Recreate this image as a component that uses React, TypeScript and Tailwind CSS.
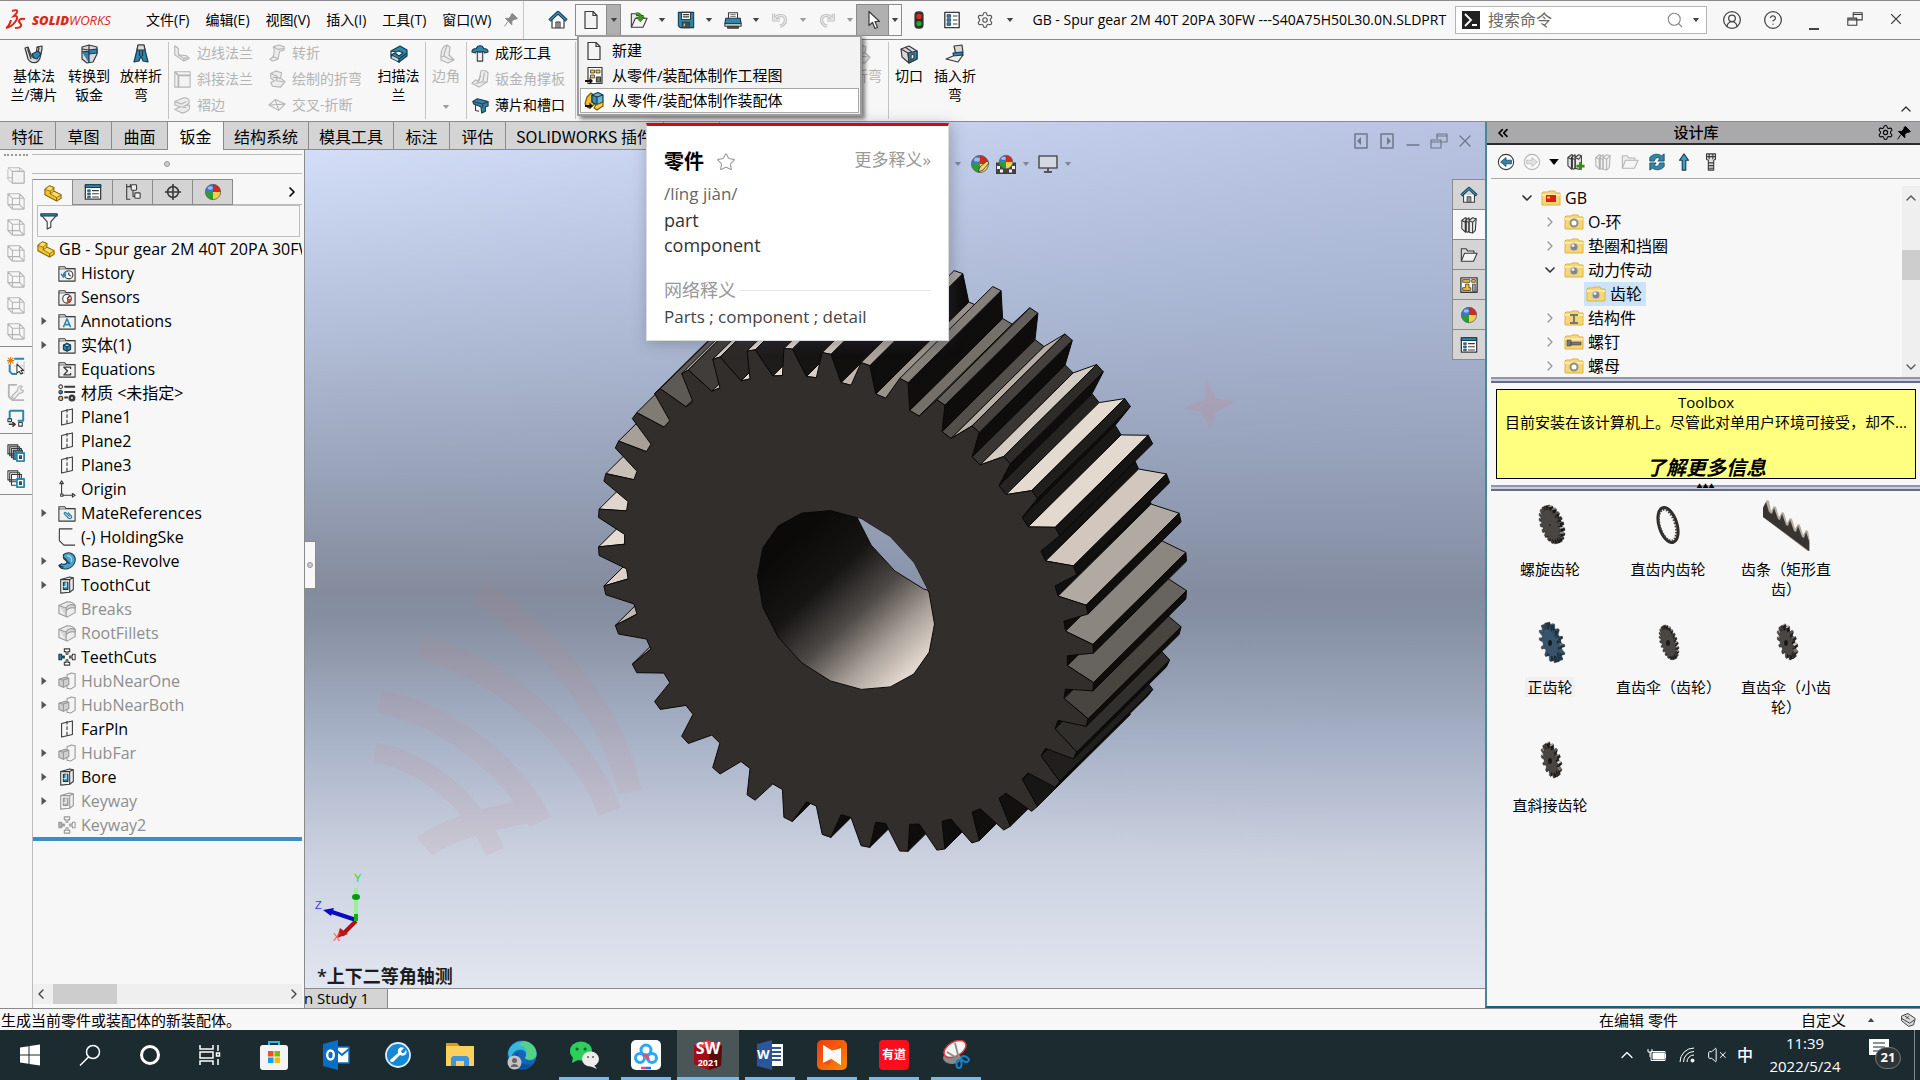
import React from 'react';
import {
  ChevronDown,
  ChevronLeft,
  ChevronRight,
  ChevronUp,
  ChevronsLeft,
  CircleHelp,
  CircleUserRound,
  Minus,
  Search,
  Settings,
  Star,
  VolumeX,
  X,
} from 'lucide-react';

type Point = [number, number];

interface IconProps {
  children: React.ReactNode;
  size?: string;
  muted?: boolean;
}

const Icon = ({ children, size = 'size-5', muted = false }: IconProps) => (
  <svg
    viewBox="0 0 20 20"
    className={`${size} shrink-0 ${muted ? 'opacity-35 grayscale' : ''}`}
    fill="none"
    stroke="#3a3a3a"
    strokeWidth="1.2"
    strokeLinejoin="round"
    aria-hidden="true"
  >
    {children}
  </svg>
);

const BLUE = '#2f86ab';
const STEEL = '#d9d9d9';

const glyphs: Record<string, React.ReactNode> = {
  home: (
    <>
      <path d="M4 10v8h12v-8" fill="#fff" />
      <path d="M8 18v-6h4v6M10 12v6" />
      <path d="M1.500 10.500 10 2.500l8.500 8" stroke="#123d54" strokeWidth="3.400" />
      <path d="M1.500 10.500 10 2.500l8.500 8" stroke="#3d93b8" strokeWidth="1.200" />
    </>
  ),
  page: (
    <>
      <path d="M4 1.500h8l4 4v13H4z" fill="#f3f3f3" />
      <path d="M12 1.500v4h4" />
    </>
  ),
  open: (
    <>
      <path d="M1.500 18V3h5l1 2h7v3" fill="#e8e8e8" />
      <path d="M1.500 18 6 8h13l-4.500 10z" fill="#f5f5f5" />
      <path d="M7 2c5 0 6 2 6 5h3l-4.500 5L7 7h3c0-2-1-3-3-5z" fill="#3f9a14" stroke="#23650a" strokeWidth=".8" />
    </>
  ),
  save: (
    <>
      <path d="M1.500 1.500h17v17h-15l-2-2z" fill={BLUE} stroke="#173b4d" />
      <path d="M5 1.500h10v8H5z" fill="#fff" />
      <path d="M6.500 4h7M6.500 6.500h7" />
      <path d="M6 12.500h8v6H6z" fill="#4c4c4c" />
      <path d="M8 14v3" stroke="#ddd" />
    </>
  ),
  print: (
    <>
      <path d="M5 8V2h10v6" fill="#fff" />
      <path d="M7 4h6M7 6h6" strokeWidth=".8" />
      <path d="M2 8h16l1 6H1z" fill={BLUE} stroke="#173b4d" />
      <path d="M1 14h18v3H1z" fill="#eee" />
      <path d="M4 17h12v2H4z" fill="#555" />
    </>
  ),
  undo: (
    <>
      <path d="M3 3v7h7M4 9c3-5 12-6 12 1 0 4-3 6-6 7" stroke="#b8b8b8" strokeWidth="3.400" />
      <path d="M3 3v7h7M4 9c3-5 12-6 12 1 0 4-3 6-6 7" stroke="#e6e6e6" strokeWidth="1.600" />
    </>
  ),
  redo: (
    <>
      <path d="M17 3v7h-7M16 9C13 4 4 3 4 10c0 4 3 6 6 7" stroke="#b8b8b8" strokeWidth="3.400" />
      <path d="M17 3v7h-7M16 9C13 4 4 3 4 10c0 4 3 6 6 7" stroke="#e6e6e6" strokeWidth="1.600" />
    </>
  ),
  cursor: <path d="M6 1.500v14l3.500-3 2.500 6 2.500-1-2.500-6h4.500z" fill="#fff" />,
  light: (
    <>
      <rect x="5.500" y="1" width="9" height="18" rx="3.500" fill="#2c2c2c" />
      <circle cx="10" cy="6" r="3" fill="#e02c14" stroke="none" />
      <circle cx="10" cy="14" r="3" fill="#25a82a" stroke="none" />
    </>
  ),
  props: (
    <>
      <path d="M2 1.500h16v17H2z" fill="#fff" strokeWidth="1.500" />
      <path d="M4.500 4h4v3h-4zM4.500 8.500h4v3h-4zM4.500 13h4v3h-4z" fill={BLUE} stroke="#173b4d" strokeWidth=".8" />
      <path d="M11 5.500h5M11 10h5M11 14.500h5" />
    </>
  ),
  list: (
    <>
      <path d="M1.500 2h17v16h-17z" fill="#fff" strokeWidth="1.400" />
      <path d="M1.500 2h17v3h-17z" fill={BLUE} stroke="#173b4d" />
      <path d="M4 7.500h3v2H4zM4 11h3v2H4zM4 14.500h3v2H4z" fill={BLUE} stroke="#173b4d" strokeWidth=".7" />
      <path d="M9 8.500h7.500M9 12h7.500M9 15.500h7.500" />
    </>
  ),
  drawing: (
    <>
      <path d="M4 1.500h14v16H4z" fill="#fff" />
      <path d="M6.500 4h4v3h-4zM12 4h4v3h-4zM6.500 9h4v3h-4z" fill="#f4c430" strokeWidth=".8" />
      <path d="M12.500 11h4v5h-4z" fill="#777" />
      <path d="M1 15h5" stroke="#111" strokeWidth="2" />
      <path d="M5.500 11.500 9 15l-3.500 3.500z" fill="#111" stroke="none" />
    </>
  ),
  assembly: (
    <>
      <path d="M3 6 7 2l4 3-1 9-6 3-3-4z" fill="#f0c02e" stroke="#7a5a08" />
      <path d="M8 4l6-2.500L19 4v7l-6 3-5-3z" fill="#6fb4d4" stroke="#173b4d" />
      <path d="M8 4l5 2v8l-5-3z" fill="#3c8fb5" stroke="#173b4d" />
      <path d="M13 6l6-2" stroke="#173b4d" />
      <path d="M12 14l7-3v4l-6 4-3-2z" fill="#f6cf4a" stroke="#7a5a08" />
      <path d="M1 15h5" stroke="#111" strokeWidth="2" />
      <path d="M5.500 11.500 9 15l-3.500 3.500z" fill="#111" stroke="none" />
    </>
  ),
  baseFlange: (
    <>
      <path d="M1 4l3-1 3 8c1 3 4 4 5 1l1-9 5-1v3l-2 9c-2 6-9 6-12 1z" fill={STEEL} />
      <path d="M8 10l6-3 3 3-4 5-3-1z" fill={BLUE} stroke="#173b4d" />
      <path d="M4 3v3l3 9M13 3l2 1-1 4" />
    </>
  ),
  convert: (
    <>
      <path d="M3 3l7-2 8 2v7l-4 8-6 1-5-4z" fill={STEEL} />
      <path d="M3 8c5-1 7-1 7 2v9M10 10l8-1v-4l-8 1z" fill={BLUE} stroke="#173b4d" />
      <path d="M3 5l7 1V1" />
    </>
  ),
  loft: (
    <>
      <path d="M7 1h6l1 5 3 12-5-1-2-5-2 5-5 1L6 6z" fill={BLUE} stroke="#173b4d" />
      <path d="M7 1h6l1 5H6z" fill={STEEL} />
      <path d="M8.500 6v6M11.500 6v6" stroke="#173b4d" />
    </>
  ),
  sweep: (
    <>
      <path d="M2 7 11 2l7 4v6l-8 6-8-4v-3l4-2 4 3 4-3-4-2-3 1z" fill={BLUE} stroke="#173b4d" />
      <path d="M2 7v4l8 4v4M10 15l8-6" stroke="#173b4d" />
      <path d="M3 13l6 3" stroke="#d7d7d7" strokeWidth="2" />
    </>
  ),
  flange: (
    <>
      <path d="M2 2l4 3v7l9 1 3 3-6 3-10-7z" fill={STEEL} />
      <path d="M6 12l6 4 6-1M12 16v3" />
    </>
  ),
  miter: (
    <>
      <path d="M2 2h17v17H2z" fill="#eee" />
      <path d="M2 2l4 4h13M6 6v13" strokeWidth="2" />
    </>
  ),
  hem: (
    <>
      <path d="M2 6 12 2c8 0 8 7 0 9l6-1c2 5-2 8-8 9L2 15l6-3-6-2z" fill={STEEL} />
      <path d="M2 6l7 3 6-3M8 12l7 1" />
    </>
  ),
  jog: (
    <>
      <path d="M6 3l6-2 6 2v4l-5 1-2 9-6 2-3-2 4-3 1-7z" fill={STEEL} />
      <path d="M6 3l5 3 7-1M5 14l6 2" />
    </>
  ),
  bend: (
    <>
      <path d="M3 4l6-3 6 2-1 6 5 4-5 6-9-1-2-4 4-2-4-3z" fill={STEEL} />
      <path d="M3 4l7 3-1 5 9 1M5 8l9 1" />
    </>
  ),
  cross: (
    <>
      <path d="M1 10l7-6 11 5-7 7z" fill="#eee" />
      <path d="M1 10l18-1M8 4l4 12" />
    </>
  ),
  corner: (
    <>
      <path d="M5 12c0-7 2-10 6-11l3 2-1 8 5 5-6 3-7-3z" fill={STEEL} />
      <path d="M11 1c0 3-3 6-3 11l5 3 5 1M8 12l-3 1" />
    </>
  ),
  gusset: (
    <>
      <path d="M11 1l4-1 4 3-1 10-9 6-8-4 4-4 4 1z" fill={STEEL} />
      <path d="M15 3l-2 10-8 2M13 13l5 1M11 6l-4 8" />
    </>
  ),
  forming: (
    <>
      <path d="M7 8h6v11H7z" fill="#eee" />
      <path d="M1 9c0-3 3-4 5-4 1-4 7-4 8 0 2 0 5 1 5 4l-4 1c0-2-2-2-3-1H8c-1-1-3-1-3 1z" fill={BLUE} stroke="#173b4d" />
    </>
  ),
  tabSlot: (
    <>
      <path d="M2 6l5-3 12 3v5l-3 1v5l-4 2-1-7-8-3z" fill={BLUE} stroke="#173b4d" />
      <path d="M2 6l11 3 6-3M13 9v4M5 10v6l4 1" />
    </>
  ),
  rip: (
    <>
      <path d="M2 5l8-3 8 5v8l-8 4-7-6z" fill={STEEL} />
      <path d="M9 9l9-2v8l-8 4z" fill={BLUE} stroke="#173b4d" />
      <path d="M2 5l7 4 1 10M6 3l7 5" />
      <path d="M12 11l3-1v4l-3 2z" fill="#eee" />
    </>
  ),
  insertBend: (
    <>
      <path d="M9 2l8-1 1 8-7 2z" fill={STEEL} />
      <path d="M8 9l9-1 1 3-9 2z" fill={BLUE} stroke="#173b4d" />
      <path d="M8 12l10-1-5 7-12-3z" fill="#eee" />
    </>
  ),
  part: (
    <>
      <path d="M1 6l5-4 5 2v4l8 4v4l-5 3L1 12z" fill="#f3c332" stroke="#8a6508" />
      <path d="M6 2l5 2-4 4-6-2zM11 8l8 4-5 3-7-4z" fill="#fbdc66" stroke="#8a6508" strokeWidth=".9" />
      <path d="M7 8v3M14 15v4" stroke="#8a6508" />
    </>
  ),
  config: (
    <>
      <path d="M3 1v17h4M3 4h5M7 1v3" />
      <rect x="8" y="2" width="6" height="6" rx="1" fill="#eee" />
      <rect x="12" y="11" width="6" height="6" rx="1" fill="#eee" />
      <path d="M10 8v7h2" />
    </>
  ),
  target: (
    <>
      <circle cx="10" cy="10" r="6" strokeWidth="1.800" />
      <path d="M10 1v18M1 10h18" strokeWidth="1.800" />
    </>
  ),
  ball: (
    <>
      <path d="M10 10V1.500A8.500 8.500 0 0 0 1.500 10z" fill="#3a78d8" stroke="none" />
      <path d="M10 10V1.500A8.500 8.500 0 0 1 18.500 10z" fill="#d02a20" stroke="none" />
      <path d="M10 10H1.500A8.500 8.500 0 0 0 10 18.500z" fill="#2f9c33" stroke="none" />
      <path d="M10 10v8.500A8.500 8.500 0 0 0 18.500 10z" fill="#f2cf4c" stroke="none" />
      <circle cx="10" cy="10" r="8.500" stroke="#555" strokeWidth=".8" />
      <ellipse cx="7" cy="5.500" rx="3" ry="2" fill="#fff" stroke="none" opacity=".5" />
    </>
  ),
  filter: (
    <>
      <path d="M1 3h18l-7 8v6l-4 2v-8z" fill="#f4f4f4" />
      <path d="M1 2h18v2.500H1z" fill={BLUE} stroke="#173b4d" />
    </>
  ),
  plane: (
    <>
      <path d="M4 4l12-3v15L4 19z" />
      <path d="M10 1v18" strokeDasharray="4 2" />
    </>
  ),
  origin: (
    <>
      <path d="M4 4v13h12" />
      <path d="M4 1l2 3H2zM19 17l-3-2v4z" fill="#fff" />
      <path d="M3 15.500h2.500V18H3z" fill="#fff" />
    </>
  ),
  sketch: <path d="M16 1H1.500v13l5 5H19" />,
  revolve: (
    <>
      <path d="M6 3c7-5 14 0 13 7-2 9-14 12-18 5l3-2c4 2 8-1 5-5l-3-2z" fill="#4ea3cb" stroke="#173b4d" />
      <path d="M6 7l7 6M1 15l5 2" stroke="#173b4d" strokeWidth="1.600" />
      <path d="M10 4c4 0 6 3 5 7" stroke="#a9d9ee" />
    </>
  ),
  cut: (
    <>
      <path d="M3 4l10-3 4 1v13l-4 3-10 1z" fill="#eee" />
      <path d="M3 4h10l4-2M13 4v14" />
      <path d="M6 7h5v8H6z" fill={BLUE} stroke="#173b4d" />
      <path d="M9 7v5H6" stroke="#fff" />
    </>
  ),
  fillet: (
    <>
      <path d="M1 6l9-4c5 0 8 2 9 4v8l-9 5-9-4z" fill="#e5e5e5" />
      <path d="M1 6l8 3v10M9 9c1-3 5-5 10-3v3c-4-1-8 0-10 3z" fill="#bbb" />
    </>
  ),
  pattern: (
    <>
      <path d="M7 1h6v3h-2v3H9V4H7zM7 19h6v-3h-2v-3H9v3H7zM19 7v6h-3v-2h-3V9h3V7z" fill="#fff" />
      <path d="M1 7v6h3v-2h3V9H4V7z" fill={BLUE} stroke="#173b4d" />
    </>
  ),
  extrude: (
    <>
      <path d="M10 3l5-2 4 1v14l-5 3-4-1z" fill="#f2f2f2" />
      <path d="M1 8l6-2 5 1v7l-6 3-5-2z" fill="#aaa" />
      <path d="M1 8l5 1 6-2M6 9v8" />
    </>
  ),
  material: (
    <>
      <circle cx="3" cy="3" r="2" fill="#fff" />
      <circle cx="3" cy="9" r="2" fill={BLUE} />
      <circle cx="3" cy="16" r="2.300" fill="#f2c12e" />
      <path d="M7 3h12M7 9h12M7 15h4" strokeWidth="2.200" />
      <circle cx="15.500" cy="15.500" r="2.500" strokeWidth="2.800" />
    </>
  ),
  cube: (
    <>
      <path d="M1 4V15l5 4h13V6l-5-4H1l5 4h13M6 6v13M14 2v11H1M14 13l5 6" strokeWidth="1" />
      <path d="M6 6h13v13H6z" fill="#eee" />
    </>
  ),
  wireCube: <path d="M1 2V14l5 5h13V7l-5-5H1l5 5h13M6 7v12M14 2v12H1M14 14l5 5" strokeWidth="1.200" />,
  select: (
    <>
      <path d="M8 2h11M3 8v8l3 3h5" stroke={BLUE} strokeWidth="2.200" />
      <path d="M12 5v14M19 5v14M7 10h12" stroke="#ccc" />
      <path d="M4 0v8M0 4h8M1 1l6 6M7 1 1 7" stroke="#d97b12" />
      <path d="M11 8v10l2.500-2 2 3 2-1-2-3h3z" fill="#fff" />
    </>
  ),
  wrench: (
    <>
      <path d="M11 2H2v13l4 4h13" strokeWidth="2" />
      <path d="M5 15l7-7c-1-4 3-6 5-4l-2 2 1 2h2c1 2-2 4-4 3l-6 7z" fill="#ddd" />
    </>
  ),
  screenIcon: (
    <>
      <path d="M3 2h15v11h-6M3 2v9" stroke={BLUE} strokeWidth="2.200" />
      <path d="M1 11h4v3H1zM13 15h4v4h-4z" fill="#fff" />
      <path d="M2 17h6M6 14.500 9 17l-3 2.500" strokeWidth="1.800" />
    </>
  ),
  stack: (
    <>
      <path d="M1 1h11v10H1zM3 3h11v10H3zM5 5h11v10H5z" fill="#ddd" />
      <path d="M7 7h10v10H7z" fill={BLUE} />
      <path d="M11 10h8v9h-8z" fill="#fff" stroke={BLUE} strokeWidth="2" />
      <path d="M14 13h2v3h-2z" fill={BLUE} />
    </>
  ),
  stackOutline: (
    <>
      <path d="M1 1h11v10H1zM3 3h11v10H3zM5 5h11v12H5z" fill="#fff" />
      <path d="M11 10h8v9h-8z" fill="#fff" stroke={BLUE} strokeWidth="2" />
      <path d="M14 13h2v3h-2z" fill={BLUE} />
    </>
  ),
  books: (
    <>
      <path d="M2 5l4-3 1 0v14l-1 2-4-4zM6 5l4-3v15l-2 1-2-1zM10 5l4-3 4 1-1 13-3 3-4-1z" fill="#e8e8e8" />
      <path d="M2 5l4 2v11M6 6l4 1v11M10 5l4 2 4-4M14 7v12" />
    </>
  ),
  addBooks: (
    <>
      <path d="M1 5l4-3 1 0v14l-1 2-4-4zM5 5l4-3v15l-2 1-2-1zM9 5l4-3 3 1v13l-3 2-4-1z" fill="#e8e8e8" />
      <path d="M1 5l4 2v11M5 6l4 1v11M9 5l4 2 3-4" />
      <path d="M15 10v9M10.500 14.500h9" stroke="#2f8f10" strokeWidth="3" />
    </>
  ),
  folder: (
    <>
      <path d="M1.500 17V3h5l2 2.500h7V8" fill="#ddd" />
      <path d="M1.500 17 5 8h14l-4 9z" fill="#f4f4f4" />
    </>
  ),
  palette: (
    <>
      <path d="M1 2h18v16H1z" fill="#fff" strokeWidth="1.500" />
      <path d="M3 4h8v3H3zM13 4h4v3h-4zM6 9h4v4h2v3H3v-3h3z" fill="#f2c12e" strokeWidth=".9" />
      <path d="M14 9h3v8h-3z" fill="#aaa" strokeWidth=".9" />
    </>
  ),
  back: (
    <>
      <circle cx="10" cy="10" r="8.500" fill="#fff" />
      <path d="M4 10l6-5v3h6v4h-6v3z" fill={BLUE} stroke="#173b4d" strokeWidth=".8" />
    </>
  ),
  forward: (
    <>
      <circle cx="10" cy="10" r="8.500" fill="#fff" />
      <path d="M16 10l-6-5v3H4v4h6v3z" fill="#bbb" strokeWidth=".8" />
    </>
  ),
  sync: (
    <>
      <path d="M2 9V5c4-5 10-4 13-2l3-2v8h-7l2-3c-3-2-5 0-6 3z" fill={BLUE} stroke="#173b4d" strokeWidth=".8" />
      <path d="M18 11v4c-4 5-10 4-13 2l-3 2v-8h7l-2 3c3 2 5 0 6-3z" fill={BLUE} stroke="#173b4d" strokeWidth=".8" />
    </>
  ),
  up: <path d="M10 1l5 7h-3v11H8V8H5z" fill="#3d9cc8" stroke="#173b4d" />,
  bolt: (
    <>
      <path d="M5 1h10v6l-2 1v11H7V8L5 7z" fill="#ddd" />
      <path d="M5 4h10M8 1v6M12 1v6M7 11h6M7 14h6M7 17h6" />
    </>
  ),
  monitor: (
    <>
      <path d="M1 2h18v12H1z" fill="#d4d8e4" stroke="#555" strokeWidth="1.600" />
      <path d="M10 14v4M6 18h8" stroke="#555" strokeWidth="2" />
    </>
  ),
  docLeft: (
    <>
      <path d="M4 3h12v14H4z" stroke="#6f7788" strokeWidth="1.500" />
      <path d="M10 6v8l-4-4z" fill="#6f7788" stroke="none" />
    </>
  ),
  docRight: (
    <>
      <path d="M4 3h12v14H4z" stroke="#6f7788" strokeWidth="1.500" />
      <path d="M10 6v8l4-4z" fill="#6f7788" stroke="none" />
    </>
  ),
  restore: <path d="M2 9h10v8H2zM8 8V3h10v8h-6M8 5h10M2 11h10" />,
  pin: <path d="M12 2l6 6-2 1-2 0-3 3 0 4-8-8 4 0 3-3 0-2zM6 12l-4 6" fill="currentColor" stroke="currentColor" />,
  tag: (
    <>
      <path d="M2 5l8-3 9 6-2 8-6 2-9-7z" fill="#ddd" />
      <path d="M2 8l10 6 6-4M6 5l6 4M8 8l3-3" />
    </>
  ),
};

const Glyph = ({ name, size, muted }: { name: string; size?: string; muted?: boolean }) => (
  <Icon size={size} muted={muted}>
    {glyphs[name]}
  </Icon>
);

// grey feature folder with a small badge in it
const FeatureFolder = ({ kind }: { kind: string }) => (
  <Icon size="size-[18px]">
    <path d="M1 19V3h6.500L9 5h10v14z" fill="#f0f0f0" />
    <path d="M1 5.500h18" strokeWidth=".8" />
    {kind === 'history' && (
      <>
        <circle cx="12" cy="12" r="4.500" fill="#fff" />
        <path d="M12 9.500V12l2.500 1.500" />
        <path d="M3.500 11l2.500 3.500 3-3M6 14c0-4 2-6 5-6" stroke={BLUE} strokeWidth="1.800" />
      </>
    )}
    {kind === 'sensor' && (
      <>
        <circle cx="10" cy="12" r="4.800" fill="#fff" />
        <path d="M10 12l3-3" strokeWidth="1.500" />
        <path d="M10 12h4.500a4.500 4.500 0 0 1-4.500 4.500z" fill="#e04020" stroke="none" />
      </>
    )}
    {kind === 'note' && <path d="M6 17 10 7.500l4 9.500M7.500 14h5" stroke={BLUE} strokeWidth="1.800" />}
    {kind === 'solid' && <path d="M6 10l4-2 4 2v5l-4 2-4-2zM6 10l4 2 4-2M10 12v5" fill={BLUE} stroke="#173b4d" />}
    {kind === 'sigma' && <path d="M14 10V8H6.500l4 4.200-4 4.300H14v-2" strokeWidth="1.400" />}
    {kind === 'mate' && (
      <path d="M13 14l-4-4c-1.500-1.500-3 0-1.500 1.500l4 4c2.500 2 5-.5 2.500-3l-3-3" stroke={BLUE} strokeWidth="1.400" />
    )}
  </Icon>
);

const Arrow = ({ muted = false }: { muted?: boolean }) => (
  <svg viewBox="0 0 8 5" className={`h-1 w-2 shrink-0 ${muted ? 'opacity-50' : ''}`} aria-hidden="true">
    <path d="M0 0h8L4 5z" fill="#444" />
  </svg>
);

interface GearProps {
  cx: number;
  cy: number;
  ux: number;
  uy: number;
  vy: number;
  dx: number;
  dy: number;
  teeth: number;
  root: number;
  tip: number;
  gap: number;
  face: string;
  light: number[];
  dark: number[];
  stroke?: number;
}

const DEG = Math.PI / 180;
const toPoints = (pts: Point[]) => pts.map((p) => p.map((n) => n.toFixed(1)).join(',')).join(' ');

// Extruded gear in oblique view, side faces painted back to front
const GearBody = (g: GearProps) => {
  const project = (r: number, deg: number): Point => {
    const c = Math.cos(deg * DEG) * r;
    const s = Math.sin(deg * DEG) * r;
    return [g.cx + g.ux * c, g.cy + g.uy * c - g.vy * s];
  };
  const step = 360 / g.teeth;
  const profile: { p: Point; a: number; r: number }[] = [];
  for (let i = 0; i < g.teeth; i += 1) {
    const mid = (i + 0.5) * step;
    [
      [g.root, -step / 2 + g.gap],
      [1, -g.tip],
      [1, g.tip],
      [g.root, step / 2 - g.gap],
    ].forEach(([r, off]) => profile.push({ p: project(r, mid + off), a: mid + off, r }));
  }
  const sides = profile
    .map((from, i) => {
      const to = profile[(i + 1) % profile.length];
      const ex = to.p[0] - from.p[0];
      const ey = to.p[1] - from.p[1];
      const fx = to.r * Math.cos(to.a * DEG) - from.r * Math.cos(from.a * DEG);
      const fy = to.r * Math.sin(to.a * DEG) - from.r * Math.sin(from.a * DEG);
      const normal = Math.atan2(-fx, fy) / DEG;
      const delta = Math.abs(((normal - 110 + 540) % 360) - 180);
      const k = Math.exp(-(delta * delta) / (2 * 31 * 31));
      const rgb = g.dark.map((c, n) => Math.round(c + (g.light[n] - c) * k));
      return {
        visible: -ey * g.dx + ex * g.dy > 0,
        depth: (from.p[0] + to.p[0]) * g.dx + (from.p[1] + to.p[1]) * g.dy,
        fill: `rgb(${rgb.join(',')})`,
        points: toPoints([
          from.p,
          to.p,
          [to.p[0] + g.dx, to.p[1] + g.dy],
          [from.p[0] + g.dx, from.p[1] + g.dy],
        ]),
      };
    })
    .filter((s) => s.visible)
    .sort((a, b) => a.depth - b.depth);

  return (
    <g stroke="#0a0908" strokeWidth={g.stroke ?? 1} strokeLinejoin="round">
      {sides.map((s) => (
        <polygon key={s.points} points={s.points} fill={s.fill} />
      ))}
      <polygon points={toPoints(profile.map((v) => v.p))} fill={g.face} />
    </g>
  );
};

const STONE = [230, 220, 210];
const COAL = [14, 13, 12];

const boreRing = (dx: number, dy: number): Point[] =>
  Array.from({ length: 18 }, (_, i) => {
    const c = Math.cos(i * 20 * DEG);
    const s = Math.sin(i * 20 * DEG);
    return [846 + dx + 88.5 * c, 478 + dy + 24 * c - 86.5 * s];
  });

const Scene = () => (
  <svg className="pointer-events-none absolute inset-0 size-full" aria-label="Spur gear" role="img">
    <defs>
      <linearGradient id="bore" gradientUnits="userSpaceOnUse" x1="780" y1="430" x2="900" y2="560">
        <stop offset="0" stopColor="#0b0a09" />
        <stop offset=".3" stopColor="#161514" />
        <stop offset=".55" stopColor="#4d4946" />
        <stop offset=".8" stopColor="#aaa19a" />
        <stop offset="1" stopColor="#e2d8cf" />
      </linearGradient>
      <linearGradient id="through" x1="0" y1="0" x2="0" y2="1">
        <stop offset="0" stopColor="#a7b2ca" />
        <stop offset="1" stopColor="#8690a6" />
      </linearGradient>
      <clipPath id="bore-clip">
        <polygon points={toPoints(boreRing(0, 0))} />
      </clipPath>
    </defs>
    <g fill="none" stroke="#d87878" strokeWidth="24" opacity=".09">
      <path d="M380 580c60 10 130 60 160 120" />
      <path d="M375 630c50 10 100 50 120 100" strokeWidth="20" />
      <path d="M420 525c80 20 160 90 190 165" />
      <path d="M480 470c60 40 130 110 150 200" />
      <path d="M425 725c20-18 70-30 100-35" />
    </g>
    <path d="M1184 286l20-8 2-22 10 20 20 4-20 10-6 16-10-16z" fill="#d87878" opacity=".18" />
    <GearBody
      cx={846}
      cy={478}
      ux={248}
      uy={68}
      vy={242}
      dx={93}
      dy={-92}
      teeth={40}
      root={0.893}
      tip={1}
      gap={1.3}
      face="#322e2b"
      light={STONE}
      dark={COAL}
    />
    <polygon points={toPoints(boreRing(0, 0))} fill="url(#bore)" stroke="#0a0908" />
    <g clipPath="url(#bore-clip)">
      <polygon points={toPoints(boreRing(93, -92))} fill="url(#through)" stroke="#0a0908" />
    </g>
    <g strokeWidth="4" fill="none">
      <path d="M356 798l-24-8" stroke="#0a0ac0" />
      <path d="M323 788l11-2-3 8z" fill="#0a0ac0" stroke="none" />
      <path d="M356 799l-14 14" stroke="#b01010" />
      <path d="M337 816l3-10 8 6z" fill="#c01818" stroke="none" />
      <path d="M356 798v-32" stroke="#96f296" />
      <path d="M356 799v-7" stroke="#12b012" />
      <ellipse cx="356" cy="775" rx="4" ry="3" fill="#08980a" stroke="none" />
    </g>
    <g className="font-['Liberation_Sans',sans-serif] text-[11px]">
      <text x="354" y="760" fill="#22e022">Y</text>
      <text x="315" y="787" fill="#3434ff">Z</text>
      <text x="333" y="819" fill="#ff5050">X</text>
    </g>
  </svg>
);

const Logo = () => (
  <div className="flex w-[138px] shrink-0 items-center gap-1 pl-1 text-[#da291c]">
    <svg viewBox="0 0 24 24" className="size-6" fill="none" stroke="currentColor" strokeWidth="2" aria-hidden="true">
      <path d="M8 3c6-2 7 0 2 5 4-1 4 3 1 6-2 3-5 5-9 6 3-1 4-5 5-8" />
      <path d="M21 11c-6-1-7 2-5 4s2 5-5 5" />
    </svg>
    <span className="font-['Open_Sans',sans-serif] text-[13px] italic leading-none">
      <b className="font-extrabold">SOLID</b>WORKS
    </span>
  </div>
);

const menus = ['文件(F)', '编辑(E)', '视图(V)', '插入(I)', '工具(T)', '窗口(W)'];

const quickTools = [
  { icon: 'open', label: '打开', muted: false },
  { icon: 'save', label: '保存', muted: false },
  { icon: 'print', label: '打印', muted: false },
  { icon: 'undo', label: '撤销', muted: true },
  { icon: 'redo', label: '重做', muted: true },
];

const TitleBar = () => (
  <header className="flex h-10 items-center border-y border-[#8b8b8b] bg-[#f7f7f7] text-sm">
    <Logo />
    <nav className="flex shrink-0">
      {menus.map((m) => (
        <button key={m} type="button" className="px-2 leading-5">
          {m}
        </button>
      ))}
    </nav>
    <span className="flex w-6 shrink-0 justify-center text-[#8a8a8a]">
      <Glyph name="pin" size="size-4" />
    </span>
    <button type="button" aria-label="主页" className="flex h-full w-13 shrink-0 items-center justify-center border-l border-[#c8c8c8] pl-4">
      <Glyph name="home" />
    </button>
    <div className="flex h-8 shrink-0 border border-[#8b8b8b]">
      <button type="button" aria-label="新建" className="flex w-[30px] items-center justify-center">
        <Glyph name="page" />
      </button>
      <button type="button" aria-label="新建选项" className="flex w-[14px] items-center justify-center border-l border-[#8b8b8b] bg-[#b0b0b0]">
        <Arrow />
      </button>
    </div>
    {quickTools.map((t) => (
      <div key={t.icon} className="flex shrink-0">
        <button type="button" aria-label={t.label} className="flex w-[35px] items-center justify-center">
          <Glyph name={t.icon} size="size-[18px]" />
        </button>
        <button type="button" aria-label={`${t.label}选项`} className="flex w-3 items-center justify-center">
          <Arrow muted={t.muted} />
        </button>
      </div>
    ))}
    <div className="flex h-8 shrink-0 border border-[#8b8b8b]">
      <button type="button" aria-label="选择" className="flex w-8 items-center justify-center border-r border-[#8b8b8b] bg-[#b0b0b0]">
        <Glyph name="cursor" />
      </button>
      <button type="button" aria-label="选择选项" className="flex w-3 items-center justify-center">
        <Arrow />
      </button>
    </div>
    {['light', 'props'].map((t) => (
      <button key={t} type="button" aria-label={t} className="flex w-[33px] shrink-0 items-center justify-center">
        <Glyph name={t} size="size-[18px]" />
      </button>
    ))}
    <button type="button" aria-label="选项" className="flex w-[46px] shrink-0 items-center gap-3 pl-2">
      <Settings className="size-[18px] text-[#555]" strokeWidth={1.5} />
      <Arrow />
    </button>
    <h1 className="ml-[18px] min-w-0 flex-1 truncate text-[14px]">GB - Spur gear 2M 40T 20PA 30FW ---S40A75H50L30.0N.SLDPRT</h1>
    <div className="flex h-7 w-[252px] shrink-0 items-center border border-[#b5b5b5] bg-white px-1.5">
      <svg viewBox="0 0 18 18" className="mr-2 size-[18px]" aria-hidden="true">
        <path d="M0 0h18v18H0z" fill="#222" />
        <path d="M3 3l6 6-6 6M10 14h5" stroke="#fff" strokeWidth="1.8" fill="none" />
      </svg>
      <input type="text" aria-label="搜索命令" placeholder="搜索命令" className="min-w-0 flex-1 text-base outline-none placeholder:text-[#6a6a6a]" />
      <Search className="mr-2 size-[18px] text-[#8a8a8a]" strokeWidth={1.5} />
      <Arrow />
    </div>
    <div className="ml-1 flex shrink-0 pr-1 text-[#444]">
      <button type="button" aria-label="登录" className="flex w-[41px] justify-center"><CircleUserRound className="size-5" strokeWidth={1.5} /></button>
      <button type="button" aria-label="帮助" className="flex w-[41px] justify-center"><CircleHelp className="size-5" strokeWidth={1.5} /></button>
      <button type="button" aria-label="最小化" className="flex w-[41px] items-end justify-center"><span className="h-0.5 w-2.5 bg-[#444]" /></button>
      <button type="button" aria-label="还原" className="flex w-[41px] justify-center"><Glyph name="restore" size="size-[18px]" /></button>
      <button type="button" aria-label="关闭" className="flex w-[41px] justify-center"><X className="size-[18px]" strokeWidth={1.5} /></button>
    </div>
  </header>
);

const BigTool = ({ icon, lines, muted = false, width }: { icon: string; lines: string[]; muted?: boolean; width: string }) => (
  <button type="button" className={`flex ${width} shrink-0 flex-col items-center pt-1 text-sm leading-[19px] ${muted ? 'text-[#b4b4b4]' : ''}`}>
    <Glyph name={icon} muted={muted} />
    {lines.map((l, i) => (
      <span key={l} className={i === 0 ? 'mt-0.5' : ''}>{l}</span>
    ))}
  </button>
);

const SmallTools = ({ items, width }: { items: [string, string, boolean][]; width: string }) => (
  <div className={`flex ${width} shrink-0 flex-col pl-1`}>
    {items.map(([icon, label, muted]) => (
      <button key={label} type="button" className={`flex h-[26px] items-center gap-1.5 text-sm ${muted ? 'text-[#b4b4b4]' : ''}`}>
        <Glyph name={icon} size="size-[18px]" muted={muted} />
        {label}
      </button>
    ))}
  </div>
);

const Divider = () => <div className="my-0.5 w-px shrink-0 bg-[#c4c4c4]" />;

const Ribbon = () => (
  <div className="relative flex h-[82px] border-b border-[#8b8b8b] bg-[#f7f7f7] pl-1">
    <BigTool icon="baseFlange" lines={['基体法', '兰/薄片']} width="w-[60px]" />
    <BigTool icon="convert" lines={['转换到', '钣金']} width="w-[50px]" />
    <BigTool icon="loft" lines={['放样折', '弯']} width="w-[54px]" />
    <Divider />
    <SmallTools width="w-[95px]" items={[['flange', '边线法兰', true], ['miter', '斜接法兰', true], ['hem', '褶边', true]]} />
    <SmallTools width="w-[108px]" items={[['jog', '转折', true], ['bend', '绘制的折弯', true], ['cross', '交叉-折断', true]]} />
    <BigTool icon="sweep" lines={['扫描法', '兰']} width="w-[53px]" />
    <Divider />
    <div className="flex w-10 shrink-0 flex-col items-center">
      <BigTool icon="corner" lines={['边角']} muted width="w-10" />
      <span className="mt-5"><Arrow muted /></span>
    </div>
    <Divider />
    <SmallTools width="w-[108px]" items={[['forming', '成形工具', false], ['gusset', '钣金角撑板', true], ['tabSlot', '薄片和槽口', false]]} />
    <Divider />
    <div className="w-[258px] shrink-0" />
    <BigTool icon="bend" lines={['不折弯']} muted width="w-[54px]" />
    <Divider />
    <BigTool icon="rip" lines={['切口']} width="w-10" />
    <BigTool icon="insertBend" lines={['插入折', '弯']} width="w-[52px]" />
    <ChevronUp className="absolute bottom-1 right-1.5 size-4 text-[#333]" />
  </div>
);

const NewMenu = () => (
  <ul className="absolute left-[577px] top-[35px] z-30 w-[285px] border-2 border-[#9c9c9c] bg-[#f3f3f3] p-px text-[15px] shadow-[3px_3px_4px_rgba(0,0,0,0.5)]">
    {[
      ['page', '新建'],
      ['drawing', '从零件/装配体制作工程图'],
      ['assembly', '从零件/装配体制作装配体'],
    ].map(([icon, label], i) => (
      <li key={label}>
        <button
          type="button"
          className={`flex h-[25px] w-full items-center gap-2 border px-[3px] ${i === 2 ? 'border-[#a8a8a8] bg-white' : 'border-transparent'}`}
        >
          <Glyph name={icon} />
          {label}
        </button>
      </li>
    ))}
  </ul>
);

const Dictionary = () => (
  <aside className="absolute left-[646px] top-[123px] z-20 w-[303px] border-x border-b border-t-3 border-[#dcdcdc] border-t-[#d20a0a] bg-white px-[17px] pb-2.5 pt-5 shadow-[2px_2px_14px_rgba(60,60,90,0.35)]">
    <div className="flex items-center leading-8">
      <h2 className="text-xl font-bold leading-8">零件</h2>
      <Star className="ml-3 size-5 text-[#999]" strokeWidth={1.3} />
      <a href="#more" className="-mt-1 ml-auto text-[17px] text-[#999]">更多释义»</a>
    </div>
    <p className="mt-0.5 text-[17px] leading-7 text-[#666]">/líng jiàn/</p>
    <p className="text-lg leading-[25px] text-[#333]">part</p>
    <p className="text-lg leading-[25px] text-[#333]">component</p>
    <div className="mt-[18px] flex items-center gap-1 text-lg leading-7 text-[#999]">
      网络释义
      <span className="h-px flex-1 bg-[#e4e4e4]" />
    </div>
    <p className="text-[17px] leading-[26px] text-[#444]">Parts ; component ; detail</p>
  </aside>
);

const tabs = ['特征', '草图', '曲面', '钣金', '结构系统', '模具工具', '标注', '评估', 'SOLIDWORKS 插件', 'MBD'];

const CommandTabs = () => (
  <div className="flex h-7 shrink-0 items-start">
    <div className="flex h-7 border-b border-[#8b8b8b] bg-[#d4d4d4] font-['Noto_Sans_CJK_SC',sans-serif] text-base">
      {tabs.map((t) => (
        <button
          key={t}
          type="button"
          className={`min-w-14 whitespace-nowrap border-r border-[#8b8b8b] px-2.5 leading-6 ${t === '钣金' ? 'h-7 bg-[#f7f7f7]' : ''}`}
        >
          {t}
        </button>
      ))}
    </div>
    <div className="ml-auto flex items-center gap-1.5 pr-2.5 pt-[5px] text-[#6f7788]">
      <Glyph name="docLeft" />
      <Glyph name="docRight" />
      <Minus className="mt-2 size-5" />
      <Icon>
        <path d="M2 9h10v8H2zM8 8V3h10v8h-6M8 5h10M2 11h10" stroke="#6f7788" />
      </Icon>
      <X className="size-5" strokeWidth={1.5} />
    </div>
  </div>
);

const viewTools = [
  ['cube', 'wireCube', 'wireCube', 'wireCube', 'wireCube', 'wireCube', 'wireCube'],
  ['select', 'wrench', 'screenIcon'],
  ['stack', 'stackOutline'],
];

const LeftTools = () => (
  <div className="w-8 shrink-0 bg-[#f7f7f7] pt-1">
    <div className="mx-1 h-1 border-t-2 border-dotted border-[#999]" />
    <div className="pt-1.5">
      {viewTools.map((group, g) => (
        <div key={group[0]} className={`flex flex-col items-center gap-2 border-b border-[#8b8b8b] pb-1.5 ${g === 0 ? 'pt-0.5' : 'pt-2.5'}`}>
          {group.map((t, i) => (
            <button key={`${t}${i}`} type="button" aria-label={`${t} ${i + 1}`}>
              <Glyph name={t} size="size-[18px]" muted={g === 0 || t === 'wrench'} />
            </button>
          ))}
        </div>
      ))}
    </div>
  </div>
);

interface Feature {
  label: string;
  icon: string;
  open?: boolean;
  off?: boolean;
}

const features: Feature[] = [
  { label: 'History', icon: 'f:history' },
  { label: 'Sensors', icon: 'f:sensor' },
  { label: 'Annotations', icon: 'f:note', open: true },
  { label: '实体(1)', icon: 'f:solid', open: true },
  { label: 'Equations', icon: 'f:sigma' },
  { label: '材质 <未指定>', icon: 'material' },
  { label: 'Plane1', icon: 'plane' },
  { label: 'Plane2', icon: 'plane' },
  { label: 'Plane3', icon: 'plane' },
  { label: 'Origin', icon: 'origin' },
  { label: 'MateReferences', icon: 'f:mate', open: true },
  { label: '(-) HoldingSke', icon: 'sketch' },
  { label: 'Base-Revolve', icon: 'revolve', open: true },
  { label: 'ToothCut', icon: 'cut', open: true },
  { label: 'Breaks', icon: 'fillet', off: true },
  { label: 'RootFillets', icon: 'fillet', off: true },
  { label: 'TeethCuts', icon: 'pattern' },
  { label: 'HubNearOne', icon: 'extrude', open: true, off: true },
  { label: 'HubNearBoth', icon: 'extrude', open: true, off: true },
  { label: 'FarPln', icon: 'plane' },
  { label: 'HubFar', icon: 'extrude', open: true, off: true },
  { label: 'Bore', icon: 'cut', open: true },
  { label: 'Keyway', icon: 'cut', open: true, off: true },
  { label: 'Keyway2', icon: 'pattern', off: true },
];

const FeatureTree = () => (
  <section className="flex w-[273px] shrink-0 flex-col border-r border-[#8b8b8b] bg-[#f7f7f7]">
    <div className="mr-0.5 mt-1 flex h-5 items-center justify-center border-y border-[#bdbdbd]">
      <span className="size-1.5 rounded-full border border-[#999] bg-[#ccc]" />
    </div>
    <div className="mr-0.5 mt-[5px] flex h-[26px] items-center border-l border-[#bdbdbd]">
      {['part', 'list', 'config', 'target', 'ball'].map((t, i) => (
        <button
          key={t}
          type="button"
          aria-label={t}
          className={`flex h-full w-10 items-center justify-center border-r border-t border-[#8b8b8b] ${i === 0 ? '' : 'border-b bg-[#d4d4d4]'}`}
        >
          <Glyph name={t} size="size-[18px]" />
        </button>
      ))}
      <span className="flex h-full flex-1 items-center justify-end border-b border-[#bdbdbd] pr-0.5"><ChevronRight className="size-4" strokeWidth={2.5} /></span>
    </div>
    <div className="flex flex-1 flex-col border-l border-[#bdbdbd]">
      <label className="mx-1 flex h-8 items-center border border-[#bdbdbd] pl-0.5">
        <Glyph name="filter" size="size-[18px]" />
        <input type="text" aria-label="过滤" className="min-w-0 flex-1 outline-none" />
      </label>
      <ul className="mr-0.5 text-[15px]">
        <li className="flex h-6 items-center gap-1 overflow-hidden whitespace-nowrap pl-1 text-base">
          <Glyph name="part" size="size-[18px]" />
          GB - Spur gear 2M 40T 20PA 30FW
        </li>
        {features.map((f) => (
          <li key={f.label} className={`flex h-6 items-center gap-1 whitespace-nowrap pl-2 ${f.off ? 'text-[#8e8e8e]' : ''}`}>
            <span className="w-3">
              {f.open && (
                <svg viewBox="0 0 5 8" className="h-2 w-1.5" aria-hidden="true"><path d="M0 0l5 4-5 4z" fill="#555" /></svg>
              )}
            </span>
            <span className={`flex w-5 justify-center ${f.off ? 'opacity-50 grayscale' : ''}`}>
              {f.icon.startsWith('f:') ? <FeatureFolder kind={f.icon.slice(2)} /> : <Glyph name={f.icon} size="size-[18px]" />}
            </span>
            <span className="text-base">{f.label}</span>
          </li>
        ))}
      </ul>
      <div className="mr-0.5 h-1 bg-[#3a8dc5]" />
      <div className="mr-0.5 mt-auto flex h-5 items-center bg-[#efefef]">
        <ChevronLeft className="size-4 text-[#444]" />
        <span className="ml-1 h-full w-16 bg-[#cdcdcd]" />
        <ChevronRight className="ml-auto size-4 text-[#444]" />
      </div>
      <div className="h-1" />
    </div>
  </section>
);

const Viewport = () => (
  <section className="relative flex min-w-0 flex-1 flex-col">
    <div className="absolute left-[649px] top-1 flex items-center text-[#555]">
      <Arrow muted />
      <Icon size="ml-2 size-5">
        {glyphs.ball}
        <path d="M8 18l2-5 7-6 2 2-6 7z" fill="#f3d27a" strokeWidth=".8" />
      </Icon>
      <Icon size="ml-1.5 size-5">
        <path d="M0 9h20v10.500H0z" fill="#444" />
        <path d="M1 12h3v3H1zM16 12h3v3h-3zM4 15.500h3v3H4zM13 15.500h3v3h-3z" fill="#eee" stroke="none" />
        <g transform="translate(2 0) scale(.8)">{glyphs.ball}</g>
      </Icon>
      <span className="ml-1.5"><Arrow muted /></span>
      <Icon size="ml-2 size-5">{glyphs.monitor}</Icon>
      <span className="ml-1.5"><Arrow muted /></span>
    </div>
    <div className="mt-[391px] flex h-12 w-[11px] items-center justify-center border-y border-r border-[#8b8b8b] bg-[#f7f7f7]">
      <span className="size-1.5 rounded-full border border-[#999] bg-[#ccc]" />
    </div>
    <nav className="absolute right-0 top-[29px] flex flex-col border-l border-t border-[#8b8b8b]">
      {['home', 'books', 'folder', 'palette', 'ball', 'list'].map((t, i) => (
        <button
          key={t}
          type="button"
          aria-label={t}
          className={`flex h-[30px] w-8 items-center justify-center border-b border-[#8b8b8b] ${i === 1 ? 'bg-[#f7f7f7]' : 'bg-[#d4d4d4]'}`}
        >
          <Glyph name={t} size="size-[18px]" />
        </button>
      ))}
    </nav>
    <p className="mt-auto pb-0.5 pl-3 text-lg font-semibold leading-5 text-[#1c1c1c]">*上下二等角轴测</p>
    <div className="flex h-5 border-t border-[#8b8b8b] bg-[#f7f7f7]">
      <button type="button" className="w-[83px] overflow-hidden whitespace-nowrap border-r border-[#8b8b8b] bg-[#d4d4d4] text-[15px] leading-[19px]">
        <span className="flex justify-end pr-[18px]">Motion Study 1</span>
      </button>
    </div>
  </section>
);

const YellowFolder = ({ kind }: { kind: string }) => (
  <svg viewBox="0 0 20 16" className="h-4 w-5 shrink-0" aria-hidden="true">
    <path d="M1 15V3l1-1h5l1-1h6l1 2h4v12z" fill="#f7d775" stroke="#dcb347" />
    <path d="M1 4h18v2H1z" fill="#fbe9a8" />
    {kind === 'flag' && <path d="M5 5h10v7H5z" fill="#d8200c" />}
    {kind === 'flag' && <path d="M6 6.500h3v2H6z" fill="#f8d32a" />}
    {kind === 'ring' && <circle cx="10" cy="9" r="3.500" fill="#fff" stroke="#8d8d8d" strokeWidth="2" />}
    {kind === 'ball' && <circle cx="10" cy="9" r="4" fill="#858585" stroke="#c9c9c9" />}
    {kind === 'ball' && <circle cx="9" cy="7.500" r="1.500" fill="#eee" />}
    {kind === 'beam' && <path d="M6 5h8M6 13h8M10 5v8" stroke="#777" strokeWidth="2" />}
    {kind === 'screw' && <path d="M3 6h4v6H3zM7 8h10v3H7z" fill="#777" stroke="#444" strokeWidth=".6" />}
  </svg>
);

const library: [number, string, string, string][] = [
  [0, 'open', 'flag', 'GB'],
  [1, 'closed', 'ring', 'O-环'],
  [1, 'closed', 'ball', '垫圈和挡圈'],
  [1, 'open', 'ball', '动力传动'],
  [2, 'none', 'ball', '齿轮'],
  [1, 'closed', 'beam', '结构件'],
  [1, 'closed', 'screw', '螺钉'],
  [1, 'closed', 'ring', '螺母'],
];

const indents = ['pl-8', 'pl-[55px]', 'pl-[77px]'];

const Thumb = ({ kind }: { kind: string }) => {
  const base = { cx: 24, cy: 24, ux: 11, uy: 8, vy: 17, root: 0.8, light: STONE, dark: [25, 23, 22], stroke: 0.3 };
  if (kind === 'ring') {
    return (
      <svg viewBox="0 0 48 48" className="size-12" aria-hidden="true">
        <g transform="rotate(-17 24 24)" fill="none">
          <ellipse cx="24" cy="24" rx="9" ry="18" stroke="#2f2c2a" strokeWidth="3" />
          <ellipse cx="23.500" cy="24" rx="7.500" ry="16" stroke="#45413e" strokeWidth="2" strokeDasharray="1.500 1.500" />
        </g>
      </svg>
    );
  }
  if (kind === 'rack') {
    return (
      <svg viewBox="0 0 48 52" className="h-[52px] w-12" aria-hidden="true">
        <path
          d="M1 18V8L5 1l2 1 2 10 3-5 2 1 3 10 3-5 2 1 3 10 3-5 2 1 3 10 3-5 2 1 3 10 3-5 2 1 2 11v11z"
          fill="#b3aaa2"
        />
        <path
          d="M1 18V9L4 3l3 10 3 2 2-6 4 11 2 1 2-6 4 11 2 1 2-6 4 11 2 1 2-6 4 11 2 1 2-6 3 9v10z"
          fill="#383431"
        />
      </svg>
    );
  }
  const spec = {
    helical: { teeth: 20, tip: 4, gap: 3, dx: 4, dy: -1, face: '#4a4643' },
    spur: { teeth: 14, tip: 3, gap: 6, dx: 4, dy: -1, face: '#37546c', light: [90, 130, 160], dark: [28, 52, 72], root: 0.7, vy: 18 },
    bevel: { teeth: 22, tip: 3, gap: 3, dx: 2, dy: -1, face: '#4a4643', ux: 9, vy: 15 },
    pinion: { teeth: 14, tip: 4, gap: 5, dx: 3, dy: -2, face: '#4a4643', ux: 9, vy: 15, root: 0.72 },
  }[kind]!;
  return (
    <svg viewBox="0 0 48 48" className="size-12" aria-hidden="true">
      <GearBody {...base} {...spec} />
      <ellipse cx="24" cy="24" rx={kind === 'helical' ? 0.8 : 2} ry={kind === 'helical' ? 1 : 3} fill="#1c1a19" />
    </svg>
  );
};

const gears: [string, string][] = [
  ['helical', '螺旋齿轮'],
  ['ring', '直齿内齿轮'],
  ['rack', '齿条（矩形直齿）'],
  ['spur', '正齿轮'],
  ['bevel', '直齿伞（齿轮）'],
  ['pinion', '直齿伞（小齿轮）'],
  ['pinion', '直斜接齿轮'],
];

const Splitter = ({ dots = false }: { dots?: boolean }) => (
  <div className="ml-1 flex h-1.5 shrink-0 justify-center border-y-2 border-b-[#676c85] border-t-[#9196ab] bg-[#c9cde0]">
    {dots && <span className="-mt-1 text-[6px] leading-none tracking-normal text-black">▲▲▲</span>}
  </div>
);

const DesignLibrary = () => (
  <aside className="flex w-[435px] shrink-0 flex-col border-b-2 border-l-2 border-b-[#1c5f75] border-l-[#4a8794] bg-[#f7f7f7]">
    <div className="flex h-[23px] items-center border-b-2 border-[#2a2a2a] bg-[#a9a9ac] px-2 text-[15px] text-black">
      <ChevronsLeft className="size-4" strokeWidth={2.5} />
      <h2 className="flex-1 pl-1 text-center font-medium">设计库</h2>
      <Settings className="mr-0.5 size-[17px]" strokeWidth={1.5} />
      <Glyph name="pin" size="size-4" />
    </div>
    <div className="ml-1 flex h-[34px] items-center gap-2 border-b border-[#a9a9a9] pl-1.5">
      <Glyph name="back" size="size-[18px]" />
      <Glyph name="forward" size="size-[18px]" muted />
      <svg viewBox="0 0 8 5" className="h-1.5 w-2.5"><path d="M0 0h8L4 5z" /></svg>
      {['addBooks', 'books', 'folder', 'sync', 'up', 'bolt'].map((t) => (
        <button key={t} type="button" aria-label={t} className="mr-px">
          <Glyph name={t} size="size-[18px]" muted={t === 'books' || t === 'folder'} />
        </button>
      ))}
    </div>
    <div className="flex h-[198px] pt-[7px]">
      <ul className="flex-1 text-base leading-6">
        {library.map(([level, state, kind, label]) => (
          <li key={label} className={`flex h-6 items-center ${indents[level]}`}>
            <span className="w-5 shrink-0">
              {state === 'open' && <ChevronDown className="size-4 text-[#333]" strokeWidth={2.5} />}
              {state === 'closed' && <ChevronRight className="size-4 text-[#999]" />}
            </span>
            <span className={`flex items-center gap-1 pr-1 pl-0.5 ${level === 2 ? 'bg-[#cce4f9]' : ''}`}>
              <YellowFolder kind={kind} />
              {label}
            </span>
          </li>
        ))}
      </ul>
      <div className="flex w-[18px] flex-col items-center bg-[#efefef]">
        <ChevronUp className="mt-1 size-4 text-[#555]" />
        <span className="mt-11 h-[30px] w-full bg-[#cdcdcd]" />
        <ChevronDown className="mb-0.5 mt-auto size-4 text-[#555]" />
      </div>
    </div>
    <Splitter />
    <div className="mx-1 ml-[9px] mt-1.5 h-[90px] shrink-0 border border-black bg-[#ffff80] px-2 text-center text-[15px] leading-5">
      <p className="pt-0.5">Toolbox</p>
      <p className="truncate">目前安装在该计算机上。尽管此对单用户环境可接受，却不...</p>
      <a href="#toolbox" className="mt-[22px] block text-xl font-semibold italic leading-7">了解更多信息</a>
    </div>
    <div className="h-1.5" />
    <Splitter dots />
    <ul className="flex flex-wrap pl-1 pt-1.5">
      {gears.map(([kind, label]) => (
        <li key={label} className="flex h-[118px] w-[118px] flex-col items-center text-center text-[15px] leading-5">
          <span className="flex h-[62px] items-center pb-1.5"><Thumb kind={kind} /></span>
          <span className={`max-w-[108px] px-0.5 ${kind === 'spur' ? 'bg-[#f0f0f0]' : ''}`}>{label}</span>
        </li>
      ))}
    </ul>
  </aside>
);

const StatusBar = () => (
  <footer className="flex h-[22px] shrink-0 items-center border-t border-[#8b8b8b] bg-[#f7f7f7] pl-px pr-1 text-[15px] leading-5">
    <span>生成当前零件或装配体的新装配体。</span>
    <span className="ml-auto w-[202px]">在编辑 零件</span>
    <span className="w-[66px]">自定义</span>
    <svg viewBox="0 0 8 5" className="mr-[25px] h-1 w-2"><path d="M0 5h8L4 0z" fill="#444" /></svg>
    <Glyph name="tag" size="size-4" />
  </footer>
);

const TaskIcon = ({ name }: { name: string }) => (
  <svg viewBox="0 0 30 30" className="size-[30px]" fill="none" aria-hidden="true">
    {name === 'start' && <path d="M5 7.500l8.500-1.300v8.300H5zM14.500 6 25 4.500v10H14.500zM5 15.500h8.500v8.300L5 22.500zM14.500 15.500H25v10L14.500 24z" fill="#fff" />}
    {name === 'search' && <path d="M24.500 12a6.500 6.500 0 1 1-13 0 6.500 6.500 0 0 1 13 0zM13.500 17 5 25.500" stroke="#fff" strokeWidth="1.500" />}
    {name === 'cortana' && <circle cx="15" cy="15" r="8.500" stroke="#fff" strokeWidth="3" />}
    {name === 'taskview' && (
      <path d="M5 5v4h13V5M5 25v-4h13v4M5 12h13v6H5zM23 5v6M23 19v6M21.500 13h3v3h-3z" stroke="#fff" strokeWidth="1.500" />
    )}
    {name === 'store' && (
      <>
        <path d="M10 6V2h10v4" stroke="#2fb5ea" strokeWidth="2" />
        <rect x="1" y="5" width="28" height="25" rx="3" fill="#f4f4f4" />
        <path d="M9 11h5.500v5.500H9z" fill="#f25022" />
        <path d="M15.500 11H21v5.500h-5.500z" fill="#7fba00" />
        <path d="M9 17.500h5.500V23H9z" fill="#00a4ef" />
        <path d="M15.500 17.500H21V23h-5.500z" fill="#ffb900" />
      </>
    )}
    {name === 'outlook' && (
      <>
        <path d="M14 7h14v16H14z" fill="#fff" stroke="#0a6fc4" strokeWidth="1.500" />
        <path d="M14 9l7 6 7-6" stroke="#0a6fc4" strokeWidth="2" />
        <path d="M2 4l15-4v30L2 26z" fill="#0a6fc4" />
        <ellipse cx="9.500" cy="15" rx="3.300" ry="4.500" stroke="#fff" strokeWidth="2.400" />
      </>
    )}
    {name === 'tool' && (
      <>
        <circle cx="15" cy="15" r="12" fill="#1588d6" stroke="#dceefa" strokeWidth="1.800" />
        <path d="M8 22l-1-2 8-7c-1-5 3-7 6-5l-3 3 1 2 2 0 2-3c2 4-2 7-6 5l-7 7z" fill="#fff" />
      </>
    )}
    {name === 'explorer' && (
      <>
        <path d="M1 3h11l3 3h13v4H1z" fill="#e09c10" />
        <path d="M1 6h28v20H1z" fill="#fbd05c" />
        <path d="M6 26v-8l2-2h14l2 2v8h-5v-5h-8v5z" fill="#3f96dd" />
      </>
    )}
    {name === 'edge' && (
      <>
        <circle cx="15" cy="15" r="14.500" fill="#1465b8" />
        <path d="M1 13C3 3 13-1 21 2c8 3 10 11 8 15-2 4-9 4-11 1 3-5-1-9-6-8C7 10 4 16 3 20z" fill="#35b8e0" />
        <path d="M17 1c8 1 13 8 12 14-1 5-8 6-11 3 4-6 2-12-7-13z" fill="#55d283" />
        <path d="M12 12c-4 6 1 15 13 12-5 6-14 6-18 2-4-5 0-12 5-14z" fill="#0d4f9c" />
        <circle cx="7.500" cy="22.500" r="7" fill="#c4c4c4" />
        <circle cx="7.500" cy="20.500" r="2.500" fill="#666" />
        <path d="M3.500 27c1-4 7-4 8 0z" fill="#666" />
      </>
    )}
    {name === 'wechat' && (
      <>
        <ellipse cx="12" cy="11" rx="11" ry="9.500" fill="#2bcf5c" />
        <path d="M4 17l-1 6 6-3z" fill="#2bcf5c" />
        <ellipse cx="21.500" cy="19" rx="8.500" ry="7.500" fill="#ececec" />
        <path d="M25 25l3 4-7-3z" fill="#ececec" />
        <path d="M8 9h.1M16 9h.1" stroke="#125c28" strokeWidth="3" strokeLinecap="round" />
        <path d="M19 17h.1M24 17h.1" stroke="#666" strokeWidth="2" strokeLinecap="round" />
      </>
    )}
    {name === 'baidu' && (
      <>
        <rect width="30" height="30" rx="5" fill="#fff" />
        <circle cx="15" cy="10" r="5" stroke="#2aa7f5" strokeWidth="3" />
        <circle cx="9" cy="18" r="4.500" stroke="#2aa7f5" strokeWidth="3" />
        <circle cx="21" cy="18" r="4.500" stroke="#2aa7f5" strokeWidth="3" />
        <path d="M12 15a4.500 4.500 0 0 1 5 5" stroke="#f0486a" strokeWidth="3" />
        <path d="M10 28h5" stroke="#f0486a" strokeWidth="2.500" />
        <path d="M15 28h5" stroke="#2a6ff5" strokeWidth="2.500" />
      </>
    )}
    {name === 'sw' && (
      <>
        <path d="M1 5 14 0l15 5-1 21-12 4L1 24z" fill="#a30e12" />
        <path d="M1 5 14 0l15 5-13 4z" fill="#e8373b" />
        <path d="M16 9l13-4-1 21-12 4z" fill="#5d0a0c" />
      </>
    )}
    {name === 'word' && (
      <>
        <path d="M14 4h14v22H14z" fill="#fff" />
        <path d="M17 8h9M17 12h9M17 16h9M17 20h9" stroke="#2b579a" strokeWidth="2" />
        <path d="M2 4l15-4v30L2 26z" fill="#2b579a" />
      </>
    )}
    {name === 'video' && (
      <>
        <rect width="30" height="30" rx="5" fill="url(#orange)" />
        <path d="M6 5l9 5.500L24 8v17l-9-6-9 4z" fill="#fff" />
        <path d="M15 10.500 24 16v9l-9-6-9 4 11-8z" fill="#f7d4c4" />
        <path d="M6 5l12 8.500L6 23zM24 8v17l-12-8z" fill="#fff" opacity=".8" />
        <path d="M15 10.500 24 5v3zM6 23l9-4-3 6z" fill="#f0500c" />
        <defs>
          <linearGradient id="orange" x1="0" y1="0" x2="1" y2="1">
            <stop offset="0" stopColor="#ee3a0c" />
            <stop offset="1" stopColor="#fb8a06" />
          </linearGradient>
        </defs>
      </>
    )}
    {name === 'youdao' && <rect width="30" height="30" rx="4" fill="#fb0d1b" />}
    {name === 'snip' && (
      <>
        <ellipse cx="11" cy="18" rx="9" ry="6" fill="#8a8a8a" />
        <ellipse cx="14" cy="9" rx="12" ry="7" transform="rotate(-30 14 9)" fill="#f6f6f6" stroke="#e0393e" strokeWidth="1.500" />
        <path d="M6 12l13 8M14 3l4 16" stroke="#8a8a8a" strokeWidth="1.800" />
        <ellipse cx="24" cy="19" rx="4" ry="2.500" transform="rotate(25 24 19)" stroke="#1681cc" strokeWidth="2" />
        <ellipse cx="18" cy="24" rx="2.500" ry="4" stroke="#1681cc" strokeWidth="2" />
      </>
    )}
  </svg>
);

const systemButtons = ['start', 'search', 'cortana', 'taskview'];
const apps = ['store', 'outlook', 'tool', 'explorer', 'edge', 'wechat', 'baidu', 'sw', 'word', 'video', 'youdao', 'snip'];

const Taskbar = () => (
  <div className="flex h-[50px] shrink-0 bg-[#1c2b30] text-white">
    {systemButtons.map((s) => (
      <button key={s} type="button" aria-label={s} className="flex w-[60px] items-center justify-center">
        <TaskIcon name={s} />
      </button>
    ))}
    <div className="flex pl-[3px]">
      {apps.map((a, i) => (
        <button
          key={a}
          type="button"
          aria-label={a}
          className={`relative flex w-[62px] flex-col items-center justify-center ${a === 'sw' ? 'bg-[#4a5558]' : ''}`}
        >
          <TaskIcon name={a} />
          {a === 'youdao' && <span className="absolute text-[12px] font-bold">有道</span>}
          {a === 'word' && <span className="absolute left-[18px] text-[13px] font-bold">W</span>}
          {a === 'sw' && (
            <span className="absolute text-center text-base font-bold leading-3">
              SW
              <br />
              <span className="text-[9px]">2021</span>
            </span>
          )}
          {i > 4 && <span className={`absolute bottom-0 h-[3px] bg-[#76b9ed] ${a === 'sw' ? 'w-full' : 'w-[50px]'}`} />}
        </button>
      ))}
    </div>
    <div className="ml-auto flex items-center">
      <ChevronUp className="mr-2.5 size-5" strokeWidth={1.5} />
      <svg viewBox="0 0 20 14" className="mr-3 h-3.5 w-5" fill="none" stroke="#fff"><path d="M4 3.500h14v9H4zM18.500 6v4M1 1v3h4V1M3 4v5" /><path d="M6 5h11v6H6z" fill="#fff" /></svg>
      <svg viewBox="0 0 16 16" className="mr-3 size-4" fill="none" stroke="#fff"><path d="M1 15A14 14 0 0 1 15 1M4.500 15A10.500 10.500 0 0 1 15 4.500M8 15a7 7 0 0 1 7-7" /><circle cx="13.500" cy="13.500" r="1.500" fill="#fff" /></svg>
      <VolumeX className="mr-2.5 size-5" strokeWidth={1.2} />
      <span className="mr-2.5 text-base font-medium">中</span>
      <div className="w-[84px] text-center text-[15px] leading-[23px]">
        <div>11:39</div>
        <div>2022/5/24</div>
      </div>
      <button type="button" aria-label="通知" className="relative ml-[22px] mr-[21px] flex h-8 w-6 items-start">
        <svg viewBox="0 0 20 20" className="size-5"><path d="M0 0h20v16H12l-4 4v-4H0z" fill="#fff" /><path d="M4 4h12M4 8h12M4 12h6" stroke="#1c2b30" /></svg>
        <span className="absolute left-1.5 top-2 flex h-[22px] w-[26px] items-center justify-center rounded-full border border-[#777] bg-[#2c3538] text-[13px] font-bold">21</span>
      </button>
      <span className="mr-[5px] h-[50px] w-px bg-[#7d878a]" />
    </div>
  </div>
);

const App = () => (
  <div className="relative flex min-h-screen flex-col overflow-hidden bg-[#f7f7f7] font-['Open_Sans','Noto_Sans_CJK_SC',sans-serif] text-black">
    <TitleBar />
    <Ribbon />
    <main className="flex flex-1">
      <div className="relative flex min-w-0 flex-1 flex-col bg-[radial-gradient(ellipse_at_100%_0%,rgba(130,145,180,0.4),transparent_60%),linear-gradient(180deg,#dae4ff_0%,#b9c5df_20%,#98a2b8_40%,#838b9c_53%,#868fa1_56%,#a9b3c8_70%,#cbd1df_83%,#e5e9f3_100%)]">
        <Scene />
        <CommandTabs />
        <div className="relative flex flex-1">
          <LeftTools />
          <FeatureTree />
          <Viewport />
        </div>
      </div>
      <DesignLibrary />
    </main>
    <StatusBar />
    <Taskbar />
    <NewMenu />
    <Dictionary />
  </div>
);

export default App;
